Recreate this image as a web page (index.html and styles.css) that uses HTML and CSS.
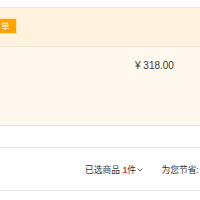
FILE: index.html
```html
<!DOCTYPE html>
<html>
<head>
<meta charset="utf-8">
<link rel="stylesheet" href="styles.css">
</head>
<body>
<div class="page">
  <div class="topgap"></div>
  <div class="shop-head">
    <span class="badge">单</span>
  </div>
  <div class="item">
    <span class="price">¥ 318.00</span>
  </div>
  <div class="blank"></div>
  <div class="summary">
    <span class="selected">已选商品 <b class="num">1</b>件<svg class="caret" width="6" height="4" viewBox="0 0 6 4"><path d="M0.5 0.5 L3 3 L5.5 0.5" fill="none" stroke="#666" stroke-width="0.9"/></svg></span>
    <span class="save">为您节省:</span>
  </div>
</div>
</body>
</html>
```
FILE: styles.css
```css
html, body {
  margin: 0;
  padding: 0;
  background: #fff;
}
.page {
  width: 200px;
  height: 200px;
  overflow: hidden;
  font-family: "Liberation Sans", "Noto Sans CJK SC", sans-serif;
  color: #333;
}
.topgap {
  height: 7px;
  border-bottom: 1px solid #e6e6e6;
}
.shop-head {
  height: 39px;
  background: #fff3e0;
  border-bottom: 1px solid #efe6da;
  box-sizing: border-box;
  padding-top: 10px;
  display: flex;
  align-items: flex-start;
}
.badge {
  display: block;
  height: 14px;
  line-height: 14px;
  background: #ffa200;
  color: #fff;
  font-size: 8.5px;
  padding: 0 6px 0 1px;
  border: 1px solid #ffe2a8;
  border-left: none;
}
.item {
  height: 79px;
  background: #fff8ef;
  border-bottom: 1px solid #e6e6e6;
  box-sizing: border-box;
  padding: 8px 0 0 135px;
}
.price {
  font-size: 10px;
  line-height: 12px;
  color: #3a3a3a;
}
.blank {
  height: 21px;
  border-bottom: 1px solid #e6e6e6;
}
.summary {
  height: 42px;
  border-bottom: 1px solid #e6e6e6;
  display: flex;
  align-items: center;
  padding-left: 85px;
  font-size: 8.75px;
  color: #333;
  white-space: nowrap;
}
.num {
  color: #e4393c;
  font-weight: bold;
}
.caret {
  margin-left: 0.5px;
  vertical-align: 1px;
}
.save {
  margin-left: 19px;
}
```
